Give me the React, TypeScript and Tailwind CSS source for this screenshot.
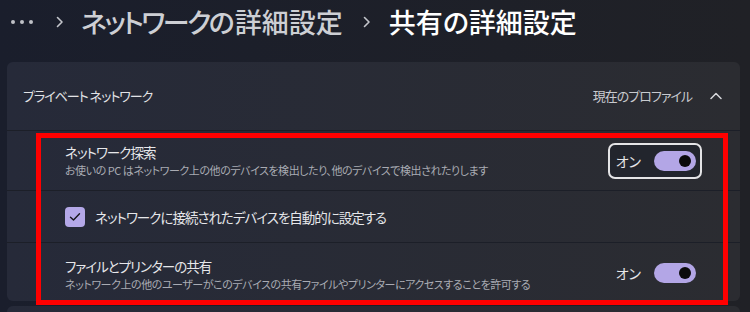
import React from "react";

function Chevron({ className }: { className?: string }) {
  return (
    <svg className={className} width="8" height="12" viewBox="0 0 8 12" fill="none">
      <path d="M1.5 1.5 L6 6 L1.5 10.5" stroke="#c3c5cb" strokeWidth="1.6" strokeLinecap="round" strokeLinejoin="round" />
    </svg>
  );
}

function Toggle() {
  return (
    <div className="flex items-center">
      <span className="text-[14px] leading-[20px] text-[#e6e6e8]">オン</span>
      <div className="ml-[13px] w-[42px] h-[20px] rounded-full bg-[#b3a6e6] flex items-center justify-end pr-[5px]">
        <div className="w-[12px] h-[12px] rounded-full bg-[#0b0b0b]" />
      </div>
    </div>
  );
}

export default function App() {
  return (
    <div className="relative w-[750px] h-[312px] overflow-hidden bg-gradient-to-r from-[#1a1e2c] to-[#202126] font-['Noto_Sans_CJK_JP','Noto_Sans',sans-serif] [font-feature-settings:'palt']">
      <header className="h-[62px]">
        <div className="h-[43px] flex items-center">
          <div className="ml-[11px] flex items-center gap-[5px]">
            <span className="w-[4px] h-[4px] rounded-full bg-[#bfc1c7]" />
            <span className="w-[4px] h-[4px] rounded-full bg-[#bfc1c7]" />
            <span className="w-[4px] h-[4px] rounded-full bg-[#bfc1c7]" />
          </div>
          <Chevron className="ml-[23px]" />
          <span className="ml-[17px] text-[27px] leading-[36px] font-medium text-[#cdcfd4]">
            <span className="tracking-[-2.5px]">ネットワーク</span>の詳細設定
          </span>
          <Chevron className="ml-[20px]" />
          <span className="ml-[18px] text-[27px] leading-[36px] font-medium text-white">共有の詳細設定</span>
        </div>
      </header>

      <section className="ml-[7px] w-[733px] rounded-[6px] bg-gradient-to-r from-[#262a39] to-[#2b2c31] overflow-hidden">
        <div className="h-[69px] flex items-center pl-[16px] pr-[18px] border-b border-[#1c1f28]">
          <span className="text-[13px] leading-[20px] tracking-[-1px] text-[#e2e3e6]">プライベート ネットワーク</span>
          <span className="ml-auto text-[13px] leading-[20px] tracking-[-1px] text-[#c8cacf]">現在のプロファイル</span>
          <svg className="ml-[18px]" width="12" height="8" viewBox="0 0 12 8" fill="none">
            <path d="M1 6.5 L6 1.5 L11 6.5" stroke="#d6d7db" strokeWidth="1.5" strokeLinecap="round" strokeLinejoin="round" />
          </svg>
        </div>

        <div className="h-[60px] flex items-center pl-[58px] pr-[38px] border-b border-[#1c1f28]">
          <div className="flex flex-col">
            <span className="text-[13.5px] leading-[20px] tracking-[-1px] text-[#e6e7ea]">ネットワーク探索</span>
            <span className="text-[11px] leading-[17px] tracking-[-0.45px] text-[#a9abb3]">お使いの PC はネットワーク上の他のデバイスを検出したり、他のデバイスで検出されたりします</span>
          </div>
          <div className="ml-auto h-[36px] pl-[6px] pr-[4px] flex items-center rounded-[7px] border-2 border-[#e4e4e6] bg-[#22252d]">
            <Toggle />
          </div>
        </div>

        <div className="h-[52px] flex items-center pl-[58px] border-b border-[#1c1f28]">
          <div className="w-[20px] h-[20px] rounded-[4px] bg-[#b4a8e8] flex items-center justify-center">
            <svg width="12" height="10" viewBox="0 0 12 10" fill="none">
              <path d="M1.5 5.2 L4.5 8 L10.5 1.8" stroke="#16161a" strokeWidth="1.4" strokeLinecap="round" strokeLinejoin="round" />
            </svg>
          </div>
          <span className="ml-[10px] text-[13.5px] leading-[20px] tracking-[-1px] text-[#e6e7ea]">ネットワークに接続されたデバイスを自動的に設定する</span>
        </div>

        <div className="h-[58px] flex items-center pl-[58px] pr-[44px]">
          <div className="flex flex-col pt-[4px]">
            <span className="text-[13.5px] leading-[20px] tracking-[-1px] text-[#e6e7ea]">ファイルとプリンターの共有</span>
            <span className="text-[11px] leading-[17px] tracking-[-0.45px] text-[#a9abb3]">ネットワーク上の他のユーザーがこのデバイスの共有ファイルやプリンターにアクセスすることを許可する</span>
          </div>
          <div className="ml-auto pt-[2px]">
            <Toggle />
          </div>
        </div>
      </section>

      <section className="mt-[5px] ml-[7px] w-[733px] h-[40px] rounded-[6px] bg-gradient-to-r from-[#262a39] to-[#2b2c31]" />

      <div className="absolute left-[36px] top-[133px] w-[692px] h-[172px] border-[5px] border-[#ff0000]" />
    </div>
  );
}
